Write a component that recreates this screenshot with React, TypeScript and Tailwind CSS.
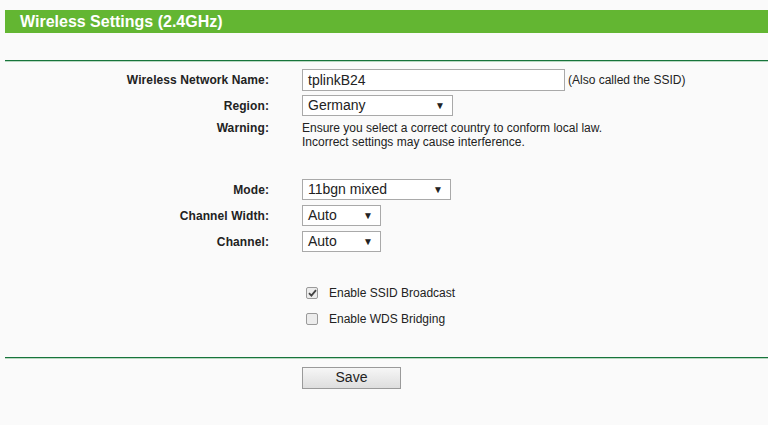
import React from "react";

function Select({ value, width }: { value: string; width: string }) {
  return (
    <div
      className={`flex h-full items-center justify-between border border-[#a9a9a9] bg-white pl-[5px] pr-[7px] text-[14px] text-[#222] ${width}`}
    >
      <span>{value}</span>
      <span className="text-[10px] leading-none text-[#222]">▼</span>
    </div>
  );
}

function Row({ label, top, height, children }: { label: string; top: string; height: string; children: React.ReactNode }) {
  return (
    <div className={`flex items-center ${top} ${height}`}>
      <div className="w-[264px] text-right text-[12px] font-bold tracking-[0.1px] text-[#222]">{label}</div>
      <div className="ml-[33px] flex h-full items-center">{children}</div>
    </div>
  );
}

function Check({ checked, label, top }: { checked: boolean; label: string; top: string }) {
  return (
    <div className={`flex h-[20px] items-center pl-[301px] ${top}`}>
      <span className="flex h-[12px] w-[12px] items-center justify-center rounded-[2px] border border-[#9a9a9a] bg-[#ececec]">
        {checked && (
          <svg width="9" height="8" viewBox="0 0 9 8">
            <path d="M1 4.2 L3.4 6.6 L8 1.2" stroke="#444" strokeWidth="1.8" fill="none" />
          </svg>
        )}
      </span>
      <span className="ml-[11px] text-[12px] text-[#222]">{label}</span>
    </div>
  );
}

export default function App() {
  return (
    <div
      className="h-[425px] w-[768px] overflow-hidden bg-[#fafafa] pl-[5px] pt-[10px]"
      style={{ fontFamily: '"Liberation Sans", Arial, sans-serif' }}
    >
      <div className="flex h-[23px] items-center bg-[#63b632] pl-[15px] text-[16px] font-bold text-white">
        Wireless Settings (2.4GHz)
      </div>
      <div className="mt-[27px] h-[2px] border-t border-[#17743b] bg-[#b9d8c2]" />

      <Row label="Wireless Network Name:" top="mt-[7px]" height="h-[22px]">
        <div className="flex h-full w-[263px] items-center border border-[#a9a9a9] bg-white pl-[5px] text-[14px] text-[#222]">
          tplinkB24
        </div>
        <span className="ml-[3px] text-[12px] text-[#222]">(Also called the SSID)</span>
      </Row>
      <Row label="Region:" top="mt-[4px]" height="h-[21px]">
        <Select value="Germany" width="w-[151px]" />
      </Row>
      <div className="mt-[5px] flex">
        <div className="w-[264px] text-right text-[12px] font-bold leading-[14px] tracking-[0.1px] text-[#222]">Warning:</div>
        <div className="ml-[33px] text-[12px] leading-[14px] text-[#222]">
          Ensure you select a correct country to conform local law.
          <br />
          Incorrect settings may cause interference.
        </div>
      </div>

      <Row label="Mode:" top="mt-[30px]" height="h-[21px]">
        <Select value="11bgn mixed" width="w-[149px]" />
      </Row>
      <Row label="Channel Width:" top="mt-[5px]" height="h-[21px]">
        <Select value="Auto" width="w-[79px]" />
      </Row>
      <Row label="Channel:" top="mt-[5px]" height="h-[21px]">
        <Select value="Auto" width="w-[79px]" />
      </Row>

      <Check checked label="Enable SSID Broadcast" top="mt-[31px]" />
      <Check checked={false} label="Enable WDS Bridging" top="mt-[6px]" />

      <div className="mt-[28px] h-[2px] border-t border-[#17743b] bg-[#b9d8c2]" />
      <div className="mt-[8px] pl-[297px]">
        <button className="flex h-[22px] w-[99px] items-center justify-center border border-[#9a9a9a] bg-gradient-to-b from-[#f6f6f6] to-[#dedede] pb-[1px] text-[14px] text-[#222]">
          Save
        </button>
      </div>
    </div>
  );
}
